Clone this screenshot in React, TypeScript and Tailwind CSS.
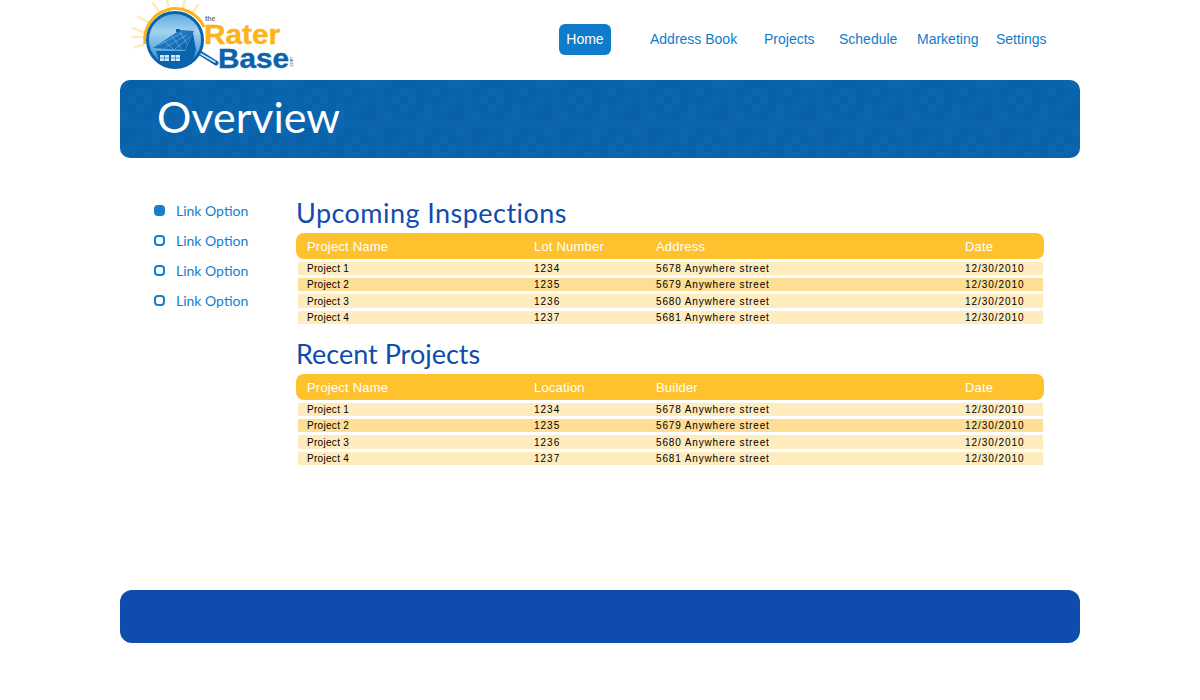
const navItems = [
  { label: 'Address Book', width: 'w-[114px]' },
  { label: 'Projects', width: 'w-[75px]' },
  { label: 'Schedule', width: 'w-[78px]' },
  { label: 'Marketing', width: 'w-[79px]' },
  { label: 'Settings', width: 'w-[60px]' },
];

const rowStyles = [
  'h-[13px] bg-[#feebbe]',
  'h-[13px] bg-[#fedd95]',
  'h-[14px] bg-[#feebbe]',
  'h-[13px] bg-[#feebbe]',
];

function buildRows() {
  return [0, 1, 2, 3].map((i) => ({
    name: `Project ${i + 1}`,
    lot: `${1234 + i}`,
    address: `${5678 + i} Anywhere street`,
    date: '12/30/2010',
  }));
}

// banner has a faint mosaic, squares are picked by a small hash so the picture is stable
const tiles = (() => {
  const out: { x: number; y: number; o: number; c: string }[] = [];
  for (let y = 0; y < 10; y++) {
    for (let x = 0; x < 120; x++) {
      const h = (x * 7919 + y * 104729 + x * y * 31) % 11;
      if (h < 4) out.push({ x: x * 8, y: y * 8, o: 0.05 + h * 0.02, c: '#2f86c8' });
      else if (h > 7) out.push({ x: x * 8, y: y * 8, o: 0.08 + (h - 8) * 0.03, c: '#06508f' });
    }
  }
  return out;
})();

function Logo() {
  return (
    <svg width="200" height="80" viewBox="0 0 200 80" className="block">
      <defs>
        <linearGradient id="sky" x1="0" y1="0" x2="0" y2="1">
          <stop offset="0" stopColor="#5aa8de" />
          <stop offset="0.35" stopColor="#a5d2ef" />
          <stop offset="0.7" stopColor="#5aa8de" />
          <stop offset="1" stopColor="#0f6db8" />
        </linearGradient>
        <linearGradient id="roof" x1="0" y1="0" x2="1" y2="1">
          <stop offset="0" stopColor="#2f8ad2" />
          <stop offset="1" stopColor="#0a5fa8" />
        </linearGradient>
      </defs>
      <g stroke="#fdeab8" strokeWidth="2.4" strokeLinecap="round">
        <path d="M15 47 L23 45" />
        <path d="M13 37 L23 37" />
        <path d="M13 28 L25 33" />
        <path d="M18 17 L28 22" />
        <path d="M33 3 L38 10" />
        <path d="M47 0 L48 5" />
        <path d="M65 0 L63 7" />
        <path d="M78 5 L73 12" />
      </g>
      <path d="M25 44 A31 31 0 0 1 84 27" fill="none" stroke="#fcb316" strokeWidth="3" />
      <circle cx="55" cy="40" r="27.5" fill="url(#sky)" stroke="#0b63ae" strokeWidth="3" />
      <path d="M33 48 L60 30 L74 31 L65 50 Z" fill="url(#roof)" />
      <path d="M39 45 L62 33 M46 47 L67 35 M55 49 L70 37 M44 41 L53 49 M52 36 L61 49 M60 32 L67 44" stroke="#8cc6ee" strokeWidth="0.5" fill="none" />
      <rect x="56" y="29" width="4" height="3" fill="#0b63ae" />
      <path d="M36 51 L65 51 L73 33 L76 50 L72 63 Q56 71 40 63 Z" fill="#0b63ae" />
      <rect x="40" y="55" width="9" height="6" fill="#d5ebf8" />
      <rect x="51" y="55" width="9" height="6" fill="#d5ebf8" />
      <path d="M44.5 55 V61 M40 58 H49 M55.5 55 V61 M51 58 H60" stroke="#0b63ae" strokeWidth="0.6" />
      <path d="M80 53 L96 63" stroke="#0b63ae" strokeWidth="5" strokeLinecap="round" />
      <path d="M81 54 L95 62" stroke="#cfe6f6" strokeWidth="1.6" strokeLinecap="round" />
      <text x="85" y="21" fontFamily="Liberation Sans" fontSize="7" fontWeight="700" fill="#777">
        the
      </text>
      <text x="84" y="44" fontFamily="Liberation Sans" fontSize="27" fontWeight="700" fill="#fcb316" stroke="#fcb316" strokeWidth="0.4" textLength="76" lengthAdjust="spacingAndGlyphs">
        Rater
      </text>
      <text x="98" y="68" fontFamily="Liberation Sans" fontSize="27" fontWeight="700" fill="#0b63ae" stroke="#0b63ae" strokeWidth="0.4" textLength="71" lengthAdjust="spacingAndGlyphs">
        Base
      </text>
      <text x="0" y="0" fontFamily="Liberation Sans" fontSize="5" fill="#0b63ae" transform="translate(173 68) rotate(-90)">
        .com
      </text>
    </svg>
  );
}

function DataTable({ title, col2, col3, titleClass }: { title: string; col2: string; col3: string; titleClass: string }) {
  const cols = 'grid grid-cols-[227px_122px_309px_1fr] items-center';
  return (
    <section>
      <h2 className={`h-[27px] font-['Lato',sans-serif] text-[27px] leading-[27px] text-[#0f4cad] ${titleClass}`}>{title}</h2>
      <div className={`${cols} mt-[7px] h-[26px] rounded-[8px] bg-[#fec22e] pl-[11px] pt-[1px] font-['Liberation_Sans',sans-serif] text-[13px] tracking-[0.2px] text-white`}>
        <span>Project Name</span>
        <span>{col2}</span>
        <span>{col3}</span>
        <span>Date</span>
      </div>
      <div className="mt-[3px] ml-[2px] mr-[1px] flex flex-col gap-[3px]">
        {buildRows().map((row, i) => (
          <div
            key={row.name}
            className={`${cols} pl-[9px] font-['Liberation_Sans',sans-serif] text-[10px] leading-[13px] text-black ${rowStyles[i]}`}
          >
            <span className="tracking-[0.3px]">{row.name}</span>
            <span className="tracking-[1px]">{row.lot}</span>
            <span className="tracking-[0.85px]">{row.address}</span>
            <span className="tracking-[0.95px]">{row.date}</span>
          </div>
        ))}
      </div>
    </section>
  );
}

export default function App() {
  return (
    <div className="mx-auto h-[700px] w-[960px] bg-white">
      <header className="flex h-[80px]">
        <div className="w-[439px]">
          <Logo />
        </div>
        <nav className="flex h-[31px] translate-y-[24px] items-center font-['Liberation_Sans',sans-serif] text-[14px] text-[#0f7ccb]">
          <a className="mr-[39px] flex h-[31px] w-[52px] items-center justify-center rounded-[6px] bg-[#0f7ccb] text-white">Home</a>
          {navItems.map((item) => (
            <a key={item.label} className={item.width}>
              {item.label}
            </a>
          ))}
        </nav>
      </header>

      <div className="relative h-[78px] overflow-hidden rounded-[10px] bg-[#0a63ad] pl-[37px]">
        <svg className="absolute inset-0" width="960" height="78">
          {tiles.map((t) => (
            <rect key={`${t.x}-${t.y}`} x={t.x} y={t.y} width="8" height="8" fill={t.c} opacity={t.o} />
          ))}
        </svg>
        <h1 className="relative font-['Lato',sans-serif] text-[43px] leading-[74px] text-white">Overview</h1>
      </div>

      <main className="flex h-[432px] pt-[38px]">
        <ul className="-mt-[1px] ml-[34px] w-[142px] font-['Lato',sans-serif] text-[14px] text-[#1380cf]">
          {['Link Option', 'Link Option', 'Link Option', 'Link Option'].map((label, i) => (
            <li key={i} className="flex h-[30px] items-center">
              <span
                className={`mr-[11px] h-[11px] w-[11px] rounded-[4px] border-2 border-[#1380cf] ${i === 0 ? 'bg-[#1380cf]' : 'bg-white'}`}
              />
              {label}
            </li>
          ))}
        </ul>
        <div className="flex w-[748px] flex-col gap-[16px] pt-[3px]">
          <DataTable title="Upcoming Inspections" col2="Lot Number" col3="Address" titleClass="tracking-[0.45px]" />
          <DataTable title="Recent Projects" col2="Location" col3="Builder" titleClass="tracking-[0px]" />
        </div>
      </main>

      <footer className="h-[53px] rounded-[12px] bg-[#0e4cad]" />
    </div>
  );
}
